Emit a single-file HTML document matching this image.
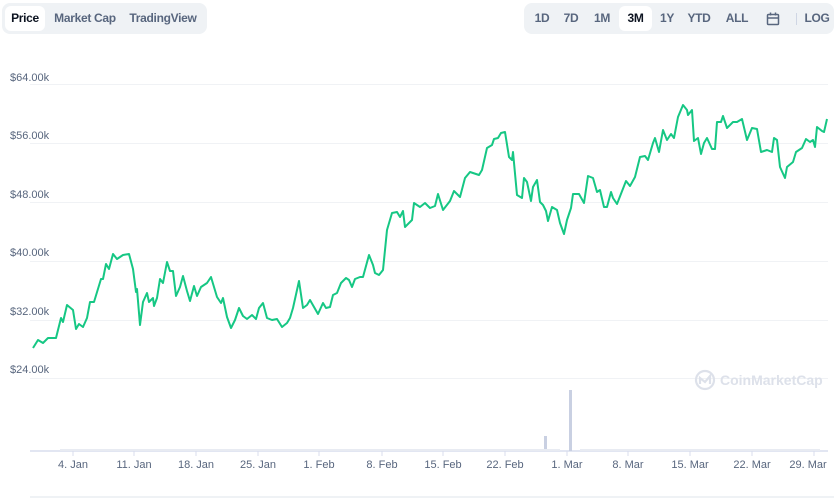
<!DOCTYPE html>
<html><head><meta charset="utf-8"><style>
body{margin:0;width:834px;height:500px;background:#fff;font-family:"Liberation Sans",sans-serif;position:relative;overflow:hidden}
.grp{position:absolute;top:3px;height:31px;background:#eff2f5;border-radius:8px}
.b{position:absolute;top:3px;height:25px;line-height:25px;font-size:12px;font-weight:bold;color:#58667e;text-align:center;border-radius:6px;letter-spacing:-0.3px}
.b.on{background:#fff;color:#0d1421}
.yl{position:absolute;left:10px;font-size:11px;color:#58667e}
.xl{position:absolute;top:459px;font-size:11px;color:#58667e;transform:translateX(-50%);white-space:nowrap}
</style></head><body>
<div class="grp" style="left:2px;width:205px">
<div class="b on" style="left:3px;width:40px">Price</div>
<div class="b" style="left:47px;width:72px">Market Cap</div>
<div class="b" style="left:122px;width:78px">TradingView</div>
</div>
<div class="grp" style="left:524px;width:310px">
<div class="b" style="left:6px;width:24px">1D</div>
<div class="b" style="left:35px;width:24px">7D</div>
<div class="b" style="left:65px;width:26px">1M</div>
<div class="b on" style="left:95px;width:33px">3M</div>
<div class="b" style="left:131px;width:24px">1Y</div>
<div class="b" style="left:160px;width:30px">YTD</div>
<div class="b" style="left:198px;width:30px">ALL</div>
<svg style="position:absolute;left:242px;top:9px" width="14" height="14" viewBox="0 0 14 14" fill="none" stroke="#58667e" stroke-width="1.5"><rect x="1.5" y="2.5" width="11" height="10" rx="1"/><line x1="1.5" y1="6" x2="12.5" y2="6"/><line x1="4.5" y1="0.5" x2="4.5" y2="3.5"/><line x1="9.5" y1="0.5" x2="9.5" y2="3.5"/></svg>
<div style="position:absolute;left:272px;top:10px;width:1px;height:12px;background:#cfd6e4"></div>
<div class="b" style="left:278px;width:30px">LOG</div>
</div>
<div class="yl" style="top:72px">$64.00k</div>
<div class="yl" style="top:130px">$56.00k</div>
<div class="yl" style="top:189px">$48.00k</div>
<div class="yl" style="top:247px">$40.00k</div>
<div class="yl" style="top:306px">$32.00k</div>
<div class="yl" style="top:364px">$24.00k</div>
<svg style="position:absolute;left:0;top:0" width="834" height="500">
<g stroke="#f0f2f5" stroke-width="1">
<line x1="30" y1="84.5" x2="828" y2="84.5"/><line x1="30" y1="143.5" x2="828" y2="143.5"/><line x1="30" y1="202.5" x2="828" y2="202.5"/><line x1="30" y1="261.5" x2="828" y2="261.5"/><line x1="30" y1="320.5" x2="828" y2="320.5"/><line x1="30" y1="378.5" x2="828" y2="378.5"/>
</g>
<g stroke="#d8dded" stroke-width="1.5"><line x1="30" y1="451" x2="828" y2="451"/></g>
<g stroke="#d8dded" stroke-width="1">
<line x1="73" y1="451" x2="73" y2="456"/><line x1="134" y1="451" x2="134" y2="456"/><line x1="196" y1="451" x2="196" y2="456"/><line x1="258" y1="451" x2="258" y2="456"/><line x1="319" y1="451" x2="319" y2="456"/><line x1="382" y1="451" x2="382" y2="456"/><line x1="443" y1="451" x2="443" y2="456"/><line x1="505" y1="451" x2="505" y2="456"/><line x1="567" y1="451" x2="567" y2="456"/><line x1="628" y1="451" x2="628" y2="456"/><line x1="690" y1="451" x2="690" y2="456"/><line x1="752" y1="451" x2="752" y2="456"/><line x1="814" y1="451" x2="814" y2="456"/>
</g>
<rect x="569" y="390" width="3" height="61" fill="#c9d0e2"/>
<rect x="544" y="436" width="3" height="15" fill="#c9d0e2"/>
<rect x="60" y="449" width="500" height="2" fill="#e8ebf2"/>
<rect x="580" y="449" width="240" height="2" fill="#e8ebf2"/>
<g fill="none" stroke="#dde1ea" stroke-width="2.2"><circle cx="705" cy="380" r="9"/><path d="M700 384 L700 378 L705 382 L710 376 L710 384"/></g>
<text x="720" y="385" font-family="Liberation Sans,sans-serif" font-size="14" font-weight="bold" fill="#dde1ea">CoinMarketCap</text>
<polyline fill="none" stroke="#16c784" stroke-width="2" stroke-linejoin="round" points="33,348 38,340 43,343 48,338 56,338 61,318 63,322 67,305 73,310 76,329 79,324 83,327 87,318 90,302 94,302 101,279 103,279 106,264 109,269 113,254 117,259 123,255 129,254 133,269 136,292 137,289 140,325 143,302 147,293 149,302 153,298 154,306 157,298 160,279 163,283 167,262 170,271 173,271 176,296 180,287 183,276 187,291 190,301 194,286 197,296 201,287 207,283 211,277 217,297 221,303 223,298 227,317 231,328 235,320 239,308 243,316 247,319 252,315 256,319 259,308 263,303 267,318 272,320 277,319 282,327 287,323 290,318 293,308 297,290 299,281 303,308 307,305 310,300 318,314 323,303 326,308 330,307 333,295 337,293 341,283 346,278 349,280 352,287 355,279 360,277 363,277 369,255 373,265 375,273 379,275 383,270 386,240 387,230 392,213 397,212 400,217 403,211 405,227 412,220 414,203 420,207 425,203 430,208 435,206 438,194 443,210 450,201 454,191 460,197 465,178 470,172 479,175 482,170 487,148 492,145 494,139 498,138 501,133 505,132 509,157 512,160 513,152 517,195 522,198 524,178 527,182 531,201 533,187 537,180 540,202 543,205 546,211 548,221 552,207 557,210 560,223 564,234 567,220 571,208 573,194 579,194 584,203 588,176 593,178 597,192 600,190 604,207 607,207 611,192 613,198 617,204 626,181 630,186 635,177 640,157 645,156 648,160 653,143 655,138 659,152 663,130 667,140 671,134 674,138 678,117 683,105 687,110 688,115 692,110 694,141 698,138 701,154 704,143 707,138 712,149 715,149 717,122 721,122 723,116 727,128 733,122 737,122 742,119 747,140 752,128 757,129 761,152 767,150 772,152 774,138 777,140 780,167 785,178 787,167 793,162 796,152 802,148 806,139 810,142 813,140 815,147 817,127 822,131 824,132 827,119"/>
<line x1="30" y1="497" x2="834" y2="497" stroke="#eff2f5" stroke-width="2"/>
</svg>
<div class="xl" style="left:73px">4. Jan</div>
<div class="xl" style="left:134px">11. Jan</div>
<div class="xl" style="left:196px">18. Jan</div>
<div class="xl" style="left:258px">25. Jan</div>
<div class="xl" style="left:319px">1. Feb</div>
<div class="xl" style="left:382px">8. Feb</div>
<div class="xl" style="left:443px">15. Feb</div>
<div class="xl" style="left:505px">22. Feb</div>
<div class="xl" style="left:567px">1. Mar</div>
<div class="xl" style="left:628px">8. Mar</div>
<div class="xl" style="left:690px">15. Mar</div>
<div class="xl" style="left:752px">22. Mar</div>
<div class="xl" style="left:808px">29. Mar</div>
</body></html>
